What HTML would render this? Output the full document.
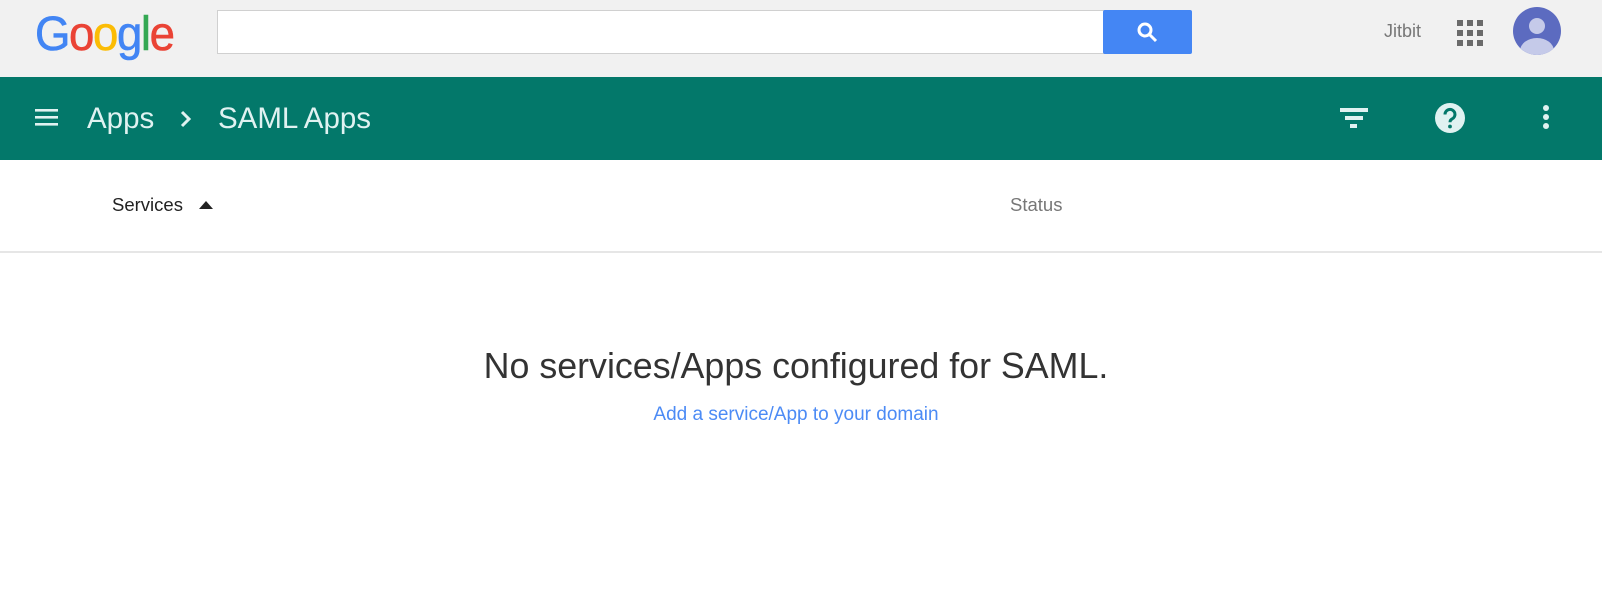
<!DOCTYPE html>
<html><head><meta charset="utf-8"><style>
*{margin:0;padding:0;box-sizing:border-box}
body{width:1602px;height:597px;background:#fff;font-family:"Liberation Sans",Arial,sans-serif;position:relative;overflow:hidden}
.top{position:absolute;left:0;top:0;width:1602px;height:77px;background:#f1f1f1}
.bar{position:absolute;left:0;top:77px;width:1602px;height:83px;background:#03786a}
.a{position:absolute;white-space:nowrap}
</style></head><body>
<div class="top"></div>
<div class="a" style="left:35px;top:7px;font-size:48px;letter-spacing:-1.5px;-webkit-text-stroke:0.6px currentColor;font-family:'Liberation Sans',sans-serif;transform:scaleX(0.95);transform-origin:left"><span style="color:#4285f4">G</span><span style="color:#ea4335">o</span><span style="color:#fbbc05">o</span><span style="color:#4285f4">g</span><span style="color:#34a853">l</span><span style="color:#ea4335">e</span></div>
<div class="a" style="left:217px;top:10px;width:888px;height:44px;background:#fff;border:1px solid #d0d0d0"></div>
<div class="a" style="left:1103px;top:10px;width:89px;height:44px;background:#4486f4;border-radius:2px"></div>
<svg class="a" style="left:1134px;top:19px" width="28" height="28" viewBox="0 0 28 28"><circle cx="11" cy="11" r="6" fill="none" stroke="#fff" stroke-width="3"/><path d="M15 15l7 7" stroke="#fff" stroke-width="3"/></svg>
<div class="a" style="left:1384px;top:21px;font-size:18px;color:#777">Jitbit</div>
<svg class="a" style="left:1457px;top:20px" width="26" height="26"><g fill="#6b6b6b"><rect x="0" y="0" width="6" height="6"/><rect x="10" y="0" width="6" height="6"/><rect x="20" y="0" width="6" height="6"/><rect x="0" y="10" width="6" height="6"/><rect x="10" y="10" width="6" height="6"/><rect x="20" y="10" width="6" height="6"/><rect x="0" y="20" width="6" height="6"/><rect x="10" y="20" width="6" height="6"/><rect x="20" y="20" width="6" height="6"/></g></svg>
<svg class="a" style="left:1513px;top:7px" width="48" height="48" viewBox="0 0 48 48"><defs><clipPath id="c"><circle cx="24" cy="24" r="24"/></clipPath></defs><circle cx="24" cy="24" r="24" fill="#5c6bc0"/><g clip-path="url(#c)" fill="#c5cae9"><circle cx="24" cy="19" r="8"/><ellipse cx="24" cy="44" rx="17" ry="13"/></g></svg>
<div class="bar"></div>
<svg class="a" style="left:35px;top:108px" width="24" height="20"><g fill="#e0f2f1"><rect y="1" width="23" height="2.6"/><rect y="8" width="23" height="2.6"/><rect y="15" width="23" height="2.6"/></g></svg>
<div class="a" style="left:87px;top:102px;font-size:29.5px;color:#e0f2f1">Apps</div>
<svg class="a" style="left:178px;top:109px" width="16" height="20"><path d="M4 3l7 7-7 7" fill="none" stroke="#e0f2f1" stroke-width="3"/></svg>
<div class="a" style="left:218px;top:102px;font-size:29.5px;color:#e0f2f1">SAML Apps</div>
<svg class="a" style="left:1340px;top:106px" width="28" height="24"><g fill="#e0f2f1"><rect x="0" y="2" width="28" height="4"/><rect x="5" y="10" width="18" height="4"/><rect x="10" y="18" width="7" height="4"/></g></svg>
<svg class="a" style="left:1434px;top:102px" width="32" height="32" viewBox="0 0 32 32"><circle cx="16" cy="16" r="15" fill="#e0f2f1"/><path d="M11 12.5a5 5 0 1 1 7 4.5c-1.5.8-2 1.6-2 3.2" fill="none" stroke="#03786a" stroke-width="3"/><circle cx="16" cy="24.5" r="1.9" fill="#03786a"/></svg>
<svg class="a" style="left:1540px;top:105px" width="12" height="26"><g fill="#e0f2f1"><circle cx="6" cy="3" r="3"/><circle cx="6" cy="12" r="3"/><circle cx="6" cy="21" r="3"/></g></svg>
<div class="a" style="left:112px;top:194px;font-size:18.5px;color:#222">Services</div>
<svg class="a" style="left:199px;top:200px" width="14" height="10"><path d="M0 9L7 1 14 9Z" fill="#222"/></svg>
<div class="a" style="left:1010px;top:194px;font-size:18.5px;color:#777">Status</div>
<div class="a" style="left:0;top:251px;width:1602px;height:2px;background:#e6e6e6"></div>
<div class="a" style="left:0;top:346px;width:1592px;text-align:center;font-size:35.8px;color:#333">No services/Apps configured for SAML.</div>
<div class="a" style="left:0;top:404px;width:1592px;text-align:center;font-size:19px;color:#4c8bf5">Add a service/App to your domain</div>
</body></html>
